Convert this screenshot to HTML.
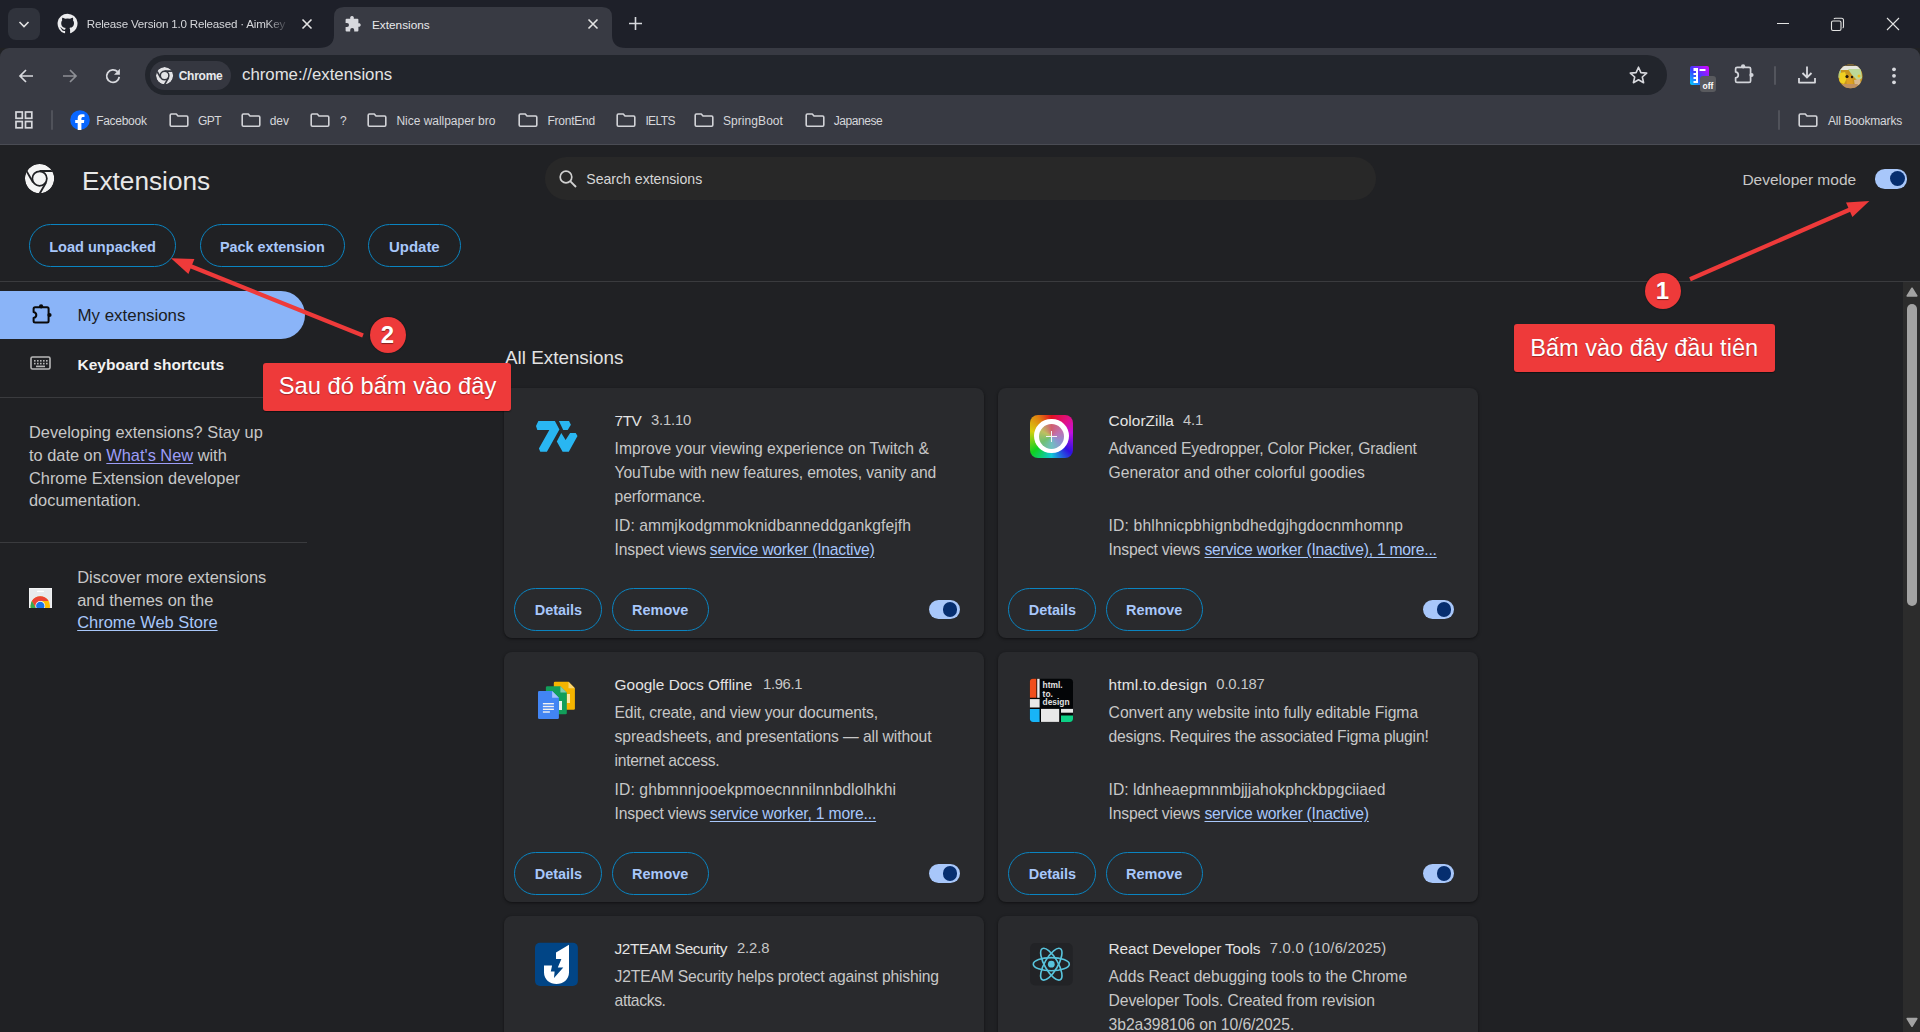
<!DOCTYPE html><html><head><meta charset="utf-8"><style>
html,body{margin:0;padding:0;width:1920px;height:1032px;overflow:hidden;background:#202124;font-family:"Liberation Sans",sans-serif;}
.a{position:absolute;}
.t{position:absolute;white-space:nowrap;line-height:1;}
svg{display:block;}
</style></head><body>
<div class="a" style="left:0px;top:0px;width:1920px;height:48px;background:#1e2029;"></div>
<div class="a" style="left:8px;top:8px;width:32px;height:32px;background:#30333c;border-radius:8px;"></div>
<svg class="a" style="left:16px;top:16px;" width="16" height="16" viewBox="0 0 16 16"><path d="M3.5 6 L8 10.5 L12.5 6" fill="none" stroke="#e3e3e3" stroke-width="1.6"/></svg>
<svg class="a" style="left:57.3px;top:13.1px;" width="21.2" height="21.2" viewBox="0 0 20 20"><path fill="#ececee" d="M10 .6a9.5 9.5 0 0 0-3 18.5c.5.1.65-.2.65-.46v-1.7c-2.64.57-3.2-1.27-3.2-1.27-.43-1.1-1.05-1.4-1.05-1.4-.86-.59.07-.58.07-.58.95.07 1.45.98 1.45.98.85 1.45 2.22 1.03 2.77.79.08-.62.33-1.03.6-1.27-2.1-.24-4.32-1.06-4.32-4.7 0-1.03.37-1.88.98-2.54-.1-.24-.43-1.21.09-2.52 0 0 .8-.26 2.6.97a9 9 0 0 1 4.74 0c1.8-1.23 2.6-.97 2.6-.97.52 1.31.19 2.28.09 2.52.61.66.98 1.51.98 2.54 0 3.65-2.22 4.46-4.34 4.7.34.3.65.88.65 1.77v2.63c0 .26.17.57.66.47A9.5 9.5 0 0 0 10 .6z"/></svg>
<div class="t" style="left:86.8px;top:17px;font-size:11.6px;line-height:14px;color:#d6d7db;width:203px;overflow:hidden;-webkit-mask-image:linear-gradient(90deg,#000 88%,transparent);mask-image:linear-gradient(90deg,#000 88%,transparent);letter-spacing:-0.2px">Release Version 1.0 Released · AimKey · GitHub</div>
<svg class="a" style="left:301px;top:18px;" width="12" height="12" viewBox="0 0 12 12"><path d="M1.5 1.5 L10.5 10.5 M10.5 1.5 L1.5 10.5" stroke="#e3e3e3" stroke-width="1.6"/></svg>
<svg class="a" style="left:318px;top:7px" width="324" height="41" viewBox="0 0 324 41"><path d="M0 41 Q16 41 16 28 L16 10 Q16 0 26 0 L284 0 Q294 0 294 10 L294 28 Q294 41 308 41 Z" fill="#383a43"/></svg>
<svg class="a" style="left:343px;top:15px;" width="18" height="18" viewBox="0 0 18 18"><path fill="#d8d9de" d="M7.2 2.2a2 2 0 0 1 3.6 0v1.6h3.6a1 1 0 0 1 1 1v3.4h1.2a2 2 0 0 1 0 3.6h-1.2v3.6a1 1 0 0 1-1 1h-3.2v-1.4a2 2 0 0 0-4 0v1.4H3.6a1 1 0 0 1-1-1v-3.4H4a2 2 0 0 0 0-4H2.6V4.8a1 1 0 0 1 1-1h3.6z"/></svg>
<div class="t " style="left:372.00px;top:20.01px;font-size:11.8px;color:#e8e9ec;">Extensions</div>
<svg class="a" style="left:587px;top:18px;" width="12" height="12" viewBox="0 0 12 12"><path d="M1.5 1.5 L10.5 10.5 M10.5 1.5 L1.5 10.5" stroke="#e3e3e3" stroke-width="1.6"/></svg>
<svg class="a" style="left:628px;top:16px;" width="15" height="15" viewBox="0 0 15 15"><path d="M7.5 1 V14 M1 7.5 H14" stroke="#d8d9de" stroke-width="1.6"/></svg>
<div class="a" style="left:1777px;top:23px;width:12px;height:1px;background:#e3e3e3;"></div>
<svg class="a" style="left:1830px;top:17px;" width="15" height="15" viewBox="0 0 15 15"><rect x="1.5" y="4" width="9.5" height="9.5" rx="1.5" fill="none" stroke="#e3e3e3" stroke-width="1.1"/><path d="M4 2.2 Q4.3 1.3 5.5 1.3 H11.5 Q13.5 1.3 13.5 3.3 V9.5 Q13.5 10.6 12.7 10.9" fill="none" stroke="#e3e3e3" stroke-width="1.1"/></svg>
<svg class="a" style="left:1886px;top:17px;" width="14" height="14" viewBox="0 0 14 14"><path d="M1 1 L13 13 M13 1 L1 13" stroke="#e3e3e3" stroke-width="1.1"/></svg>
<div class="a" style="left:0px;top:48px;width:1920px;height:97px;background:#383a43;border-radius:9px 9px 0 0;"></div>
<div class="a" style="left:0px;top:144px;width:1920px;height:1px;background:#4a4c54;"></div>
<svg class="a" style="left:17px;top:67px;" width="18" height="18" viewBox="0 0 18 18"><path d="M16 9 H3 M9 3 L3 9 L9 15" fill="none" stroke="#d8d9de" stroke-width="1.7"/></svg>
<svg class="a" style="left:61px;top:67px;" width="18" height="18" viewBox="0 0 18 18"><path d="M2 9 H15 M9 3 L15 9 L9 15" fill="none" stroke="#8d8f95" stroke-width="1.7"/></svg>
<svg class="a" style="left:104px;top:67px;" width="18" height="18" viewBox="0 0 18 18"><path d="M15.25 9.87 A6.3 6.3 0 1 1 13.53 4.72" fill="none" stroke="#d8d9de" stroke-width="1.8"/><path d="M15.9 1.7 V7.8 H10 Z" fill="#d8d9de"/></svg>
<div class="a" style="left:145px;top:55px;width:1522px;height:40px;background:#22252c;border-radius:20px;"></div>
<div class="a" style="left:150px;top:61px;width:81px;height:29px;background:#353740;border-radius:14.5px;"></div>
<svg class="a" style="left:154.8px;top:66.10000000000001px" width="19.2" height="19.2" viewBox="0 0 19.2 19.2"><defs><clipPath id="cl164"><circle cx="9.6" cy="9.6" r="8.6"/></clipPath></defs><g clip-path="url(#cl164)"><circle cx="9.6" cy="9.6" r="8.6" fill="#e3e3e6"/><circle cx="9.6" cy="9.6" r="4.27054794520548" fill="none" stroke="#353740" stroke-width="1.4946917808219178"/><path d="M9.6 5.152739726027397 H19.2" stroke="#353740" stroke-width="1.665513698630137" transform="rotate(0 9.6 9.6)"/><path d="M9.6 5.152739726027397 H19.2" stroke="#353740" stroke-width="1.665513698630137" transform="rotate(120 9.6 9.6)"/><path d="M9.6 5.152739726027397 H19.2" stroke="#353740" stroke-width="1.665513698630137" transform="rotate(240 9.6 9.6)"/></g></svg>
<div class="t " style="left:178.70px;top:70.04px;font-size:12px;color:#e8e9ec;font-weight:bold;letter-spacing:-0.25px;">Chrome</div>
<div class="t " style="left:242.00px;top:67.28px;font-size:16.8px;color:#e3e3e3;">chrome://extensions</div>
<svg class="a" style="left:1628px;top:65px;" width="21" height="21" viewBox="0 0 21 21"><path d="M10.5 2.2 L12.9 7.6 L18.7 8.1 L14.3 12 L15.6 17.7 L10.5 14.7 L5.4 17.7 L6.7 12 L2.3 8.1 L8.1 7.6 Z" fill="none" stroke="#d8d9de" stroke-width="1.6" stroke-linejoin="round"/></svg>
<svg class="a" style="left:1688px;top:64px" width="30" height="30" viewBox="0 0 30 30">
<defs><linearGradient id="gx" x1="0" y1="1" x2="1" y2="0"><stop offset="0" stop-color="#00d8ff"/><stop offset=".45" stop-color="#3a3cff"/><stop offset="1" stop-color="#e000ff"/></linearGradient></defs>
<rect x="2" y="2" width="19" height="19" rx="2" fill="url(#gx)"/>
<path d="M5.5 4 H10 V19 H5.5 V17 H8 V15 H5.5 V13 H8 V11 H5.5 V9 H8 V7 H5.5 Z" fill="#fff"/>
<rect x="11.5" y="5" width="6" height="2" fill="#fff"/>
<rect x="12" y="12" width="16" height="16" rx="3" fill="#595a5e"/>
<text x="20" y="24.5" font-family="Liberation Sans" font-weight="bold" font-size="8.5" fill="#fff" text-anchor="middle">off</text>
</svg>
<svg class="a" style="left:1728px;top:58px;" width="32" height="32" viewBox="0 0 32 32"><path d="M9.1 9.3 H21.1 Q22.6 9.3 22.6 10.8 V22.9 Q22.6 24.4 21.1 24.4 H9.1 Q7.6 24.4 7.6 22.9 V19.9 Q10.3 19.3 10.3 16.9 Q10.3 14.5 7.6 13.9 V10.8 Q7.6 9.3 9.1 9.3 Z" fill="none" stroke="#d2d4da" stroke-width="1.7" stroke-linejoin="round"/><circle cx="15.1" cy="8.3" r="2.1" fill="#d2d4da"/><circle cx="23.5" cy="17" r="2.1" fill="#d2d4da"/></svg>
<div class="a" style="left:1774px;top:66px;width:2px;height:19px;background:#53555d;border-radius:1px;"></div>
<svg class="a" style="left:1796px;top:64px;" width="22" height="22" viewBox="0 0 22 22"><path d="M11 2.5 V13.5 M6.5 9 L11 13.5 L15.5 9" fill="none" stroke="#d8d9de" stroke-width="1.8"/><path d="M3 14 V18.6 H19 V14" fill="none" stroke="#d8d9de" stroke-width="1.8" stroke-linejoin="round"/></svg>
<svg class="a" style="left:1837.5px;top:64px" width="25" height="25" viewBox="0 0 25 25">
<defs><clipPath id="av"><circle cx="12.5" cy="12.3" r="12"/></clipPath><filter id="avb"><feGaussianBlur stdDeviation=".6"/></filter></defs>
<g clip-path="url(#av)"><rect width="25" height="25" fill="#c8961e"/>
<g filter="url(#avb)">
<rect x="0" y="0" width="25" height="6" fill="#6a5a3a"/>
<path d="M3 2 H22 L23 6 H2 Z" fill="#e6e6de"/>
<path d="M10 5 L23 5 L24 14 L20 17 L14 11 Z" fill="#bcd898"/>
<rect x="0" y="6" width="3" height="8" fill="#a8c888"/>
<path d="M2 9 L7 8 L9 14 L6 20 L1 18 Z" fill="#f0d020"/>
<path d="M8 11 L14 12 L15 20 L9 22 Z" fill="#e0a020"/>
<circle cx="9" cy="12.5" r="1.6" fill="#1a1208"/><circle cx="14" cy="13" r="1.2" fill="#2a1a08"/>
<path d="M16 16 L22 15 L23 21 L17 22 Z" fill="#d8b890"/>
<path d="M4 20 L20 20 L18 25 L6 25 Z" fill="#c09060"/>
<circle cx="21" cy="12" r="1.5" fill="#f0c018"/>
</g></g></svg>
<svg class="a" style="left:1890px;top:66px;" width="8" height="20" viewBox="0 0 8 20"><circle cx="4" cy="3.3" r="1.9" fill="#d8d9de"/><circle cx="4" cy="9.8" r="1.9" fill="#d8d9de"/><circle cx="4" cy="16.3" r="1.9" fill="#d8d9de"/></svg>
<svg class="a" style="left:15px;top:111px;" width="18" height="18" viewBox="0 0 18 18"><g fill="none" stroke="#d8d9de" stroke-width="1.7"><rect x="1" y="1" width="6.3" height="6.3"/><rect x="10.5" y="1" width="6.3" height="6.3"/><rect x="1" y="10.5" width="6.3" height="6.3"/><rect x="10.5" y="10.5" width="6.3" height="6.3"/></g></svg>
<div class="a" style="left:50.8px;top:110px;width:2px;height:20px;background:#50525a;border-radius:1px;"></div>
<svg class="a" style="left:70px;top:110px;" width="20" height="20" viewBox="0 0 20 20"><circle cx="10" cy="10" r="9.8" fill="#0866ff"/><path d="M7.7 20 V12.9 H5.2 V10.1 H7.7 V8.3 C7.7 5.7 9.2 4.2 11.8 4.2 C12.9 4.2 13.9 4.3 14.5 4.4 V6.9 H13.1 C11.9 6.9 11.4 7.5 11.4 8.4 V10.1 H14.3 L13.9 12.9 H11.4 V20 Z" fill="#fff"/></svg>
<div class="t" style="left:96.2px;top:115.14px;font-size:12px;letter-spacing:-0.287px;color:#d6d7db;">Facebook</div>
<svg class="a" style="left:168.9px;top:113px;" width="20" height="14" viewBox="0 0 20 14"><path d="M1.2 2.2 Q1.2 1 2.4 1 H7.3 L9 3 H17.6 Q18.8 3 18.8 4.2 V12 Q18.8 13.2 17.6 13.2 H2.4 Q1.2 13.2 1.2 12 Z" fill="none" stroke="#d2d3d8" stroke-width="1.6" stroke-linejoin="round"/></svg>
<div class="t" style="left:198px;top:115.14px;font-size:12px;letter-spacing:-0.6px;color:#d6d7db;">GPT</div>
<svg class="a" style="left:241px;top:113px;" width="20" height="14" viewBox="0 0 20 14"><path d="M1.2 2.2 Q1.2 1 2.4 1 H7.3 L9 3 H17.6 Q18.8 3 18.8 4.2 V12 Q18.8 13.2 17.6 13.2 H2.4 Q1.2 13.2 1.2 12 Z" fill="none" stroke="#d2d3d8" stroke-width="1.6" stroke-linejoin="round"/></svg>
<div class="t" style="left:269.7px;top:115.14px;font-size:12px;letter-spacing:-0.015px;color:#d6d7db;">dev</div>
<svg class="a" style="left:309.8px;top:113px;" width="20" height="14" viewBox="0 0 20 14"><path d="M1.2 2.2 Q1.2 1 2.4 1 H7.3 L9 3 H17.6 Q18.8 3 18.8 4.2 V12 Q18.8 13.2 17.6 13.2 H2.4 Q1.2 13.2 1.2 12 Z" fill="none" stroke="#d2d3d8" stroke-width="1.6" stroke-linejoin="round"/></svg>
<div class="t" style="left:340px;top:115.14px;font-size:12px;letter-spacing:0px;color:#d6d7db;">?</div>
<svg class="a" style="left:367px;top:113px;" width="20" height="14" viewBox="0 0 20 14"><path d="M1.2 2.2 Q1.2 1 2.4 1 H7.3 L9 3 H17.6 Q18.8 3 18.8 4.2 V12 Q18.8 13.2 17.6 13.2 H2.4 Q1.2 13.2 1.2 12 Z" fill="none" stroke="#d2d3d8" stroke-width="1.6" stroke-linejoin="round"/></svg>
<div class="t" style="left:396.4px;top:115.14px;font-size:12px;letter-spacing:-0.021px;color:#d6d7db;">Nice wallpaper bro</div>
<svg class="a" style="left:518.3px;top:113px;" width="20" height="14" viewBox="0 0 20 14"><path d="M1.2 2.2 Q1.2 1 2.4 1 H7.3 L9 3 H17.6 Q18.8 3 18.8 4.2 V12 Q18.8 13.2 17.6 13.2 H2.4 Q1.2 13.2 1.2 12 Z" fill="none" stroke="#d2d3d8" stroke-width="1.6" stroke-linejoin="round"/></svg>
<div class="t" style="left:547.5px;top:115.14px;font-size:12px;letter-spacing:-0.257px;color:#d6d7db;">FrontEnd</div>
<svg class="a" style="left:616px;top:113px;" width="20" height="14" viewBox="0 0 20 14"><path d="M1.2 2.2 Q1.2 1 2.4 1 H7.3 L9 3 H17.6 Q18.8 3 18.8 4.2 V12 Q18.8 13.2 17.6 13.2 H2.4 Q1.2 13.2 1.2 12 Z" fill="none" stroke="#d2d3d8" stroke-width="1.6" stroke-linejoin="round"/></svg>
<div class="t" style="left:645.4px;top:115.14px;font-size:12px;letter-spacing:-0.6px;color:#d6d7db;">IELTS</div>
<svg class="a" style="left:694px;top:113px;" width="20" height="14" viewBox="0 0 20 14"><path d="M1.2 2.2 Q1.2 1 2.4 1 H7.3 L9 3 H17.6 Q18.8 3 18.8 4.2 V12 Q18.8 13.2 17.6 13.2 H2.4 Q1.2 13.2 1.2 12 Z" fill="none" stroke="#d2d3d8" stroke-width="1.6" stroke-linejoin="round"/></svg>
<div class="t" style="left:723px;top:115.14px;font-size:12px;letter-spacing:0.063px;color:#d6d7db;">SpringBoot</div>
<svg class="a" style="left:805px;top:113px;" width="20" height="14" viewBox="0 0 20 14"><path d="M1.2 2.2 Q1.2 1 2.4 1 H7.3 L9 3 H17.6 Q18.8 3 18.8 4.2 V12 Q18.8 13.2 17.6 13.2 H2.4 Q1.2 13.2 1.2 12 Z" fill="none" stroke="#d2d3d8" stroke-width="1.6" stroke-linejoin="round"/></svg>
<div class="t" style="left:833.75px;top:115.14px;font-size:12px;letter-spacing:-0.436px;color:#d6d7db;">Japanese</div>
<div class="a" style="left:1777.6px;top:110px;width:2px;height:20px;background:#50525a;border-radius:1px;"></div>
<svg class="a" style="left:1798px;top:113px;" width="20" height="14" viewBox="0 0 20 14"><path d="M1.2 2.2 Q1.2 1 2.4 1 H7.3 L9 3 H17.6 Q18.8 3 18.8 4.2 V12 Q18.8 13.2 17.6 13.2 H2.4 Q1.2 13.2 1.2 12 Z" fill="none" stroke="#d2d3d8" stroke-width="1.6" stroke-linejoin="round"/></svg>
<div class="t " style="left:1827.90px;top:115.14px;font-size:12px;color:#d6d7db;letter-spacing:-0.2px;">All Bookmarks</div>
<svg class="a" style="left:23.85px;top:162.85px" width="31.2" height="31.2" viewBox="0 0 31.2 31.2"><defs><clipPath id="cl39"><circle cx="15.6" cy="15.6" r="14.6"/></clipPath></defs><g clip-path="url(#cl39)"><circle cx="15.6" cy="15.6" r="14.6" fill="#f4f4f4"/><circle cx="15.6" cy="15.6" r="7.25" fill="none" stroke="#202124" stroke-width="1.75"/><path d="M15.6 8.05 H31.2" stroke="#202124" stroke-width="1.95" transform="rotate(0 15.6 15.6)"/><path d="M15.6 8.05 H31.2" stroke="#202124" stroke-width="1.95" transform="rotate(120 15.6 15.6)"/><path d="M15.6 8.05 H31.2" stroke="#202124" stroke-width="1.95" transform="rotate(240 15.6 15.6)"/></g></svg>
<div class="t " style="left:82.00px;top:167.92px;font-size:26.2px;color:#e8e8e8;">Extensions</div>
<div class="a" style="left:545px;top:157px;width:831px;height:43px;background:#282828;border-radius:21.5px;"></div>
<svg class="a" style="left:558px;top:169px;" width="20" height="20" viewBox="0 0 20 20"><circle cx="8" cy="8" r="5.8" fill="none" stroke="#d0d0d0" stroke-width="1.7"/><path d="M12.2 12.2 L18 18" stroke="#d0d0d0" stroke-width="1.9"/></svg>
<div class="t " style="left:586.25px;top:171.81px;font-size:14.1px;color:#d6d6d6;">Search extensions</div>
<div class="t " style="left:1742.40px;top:172.08px;font-size:15.5px;color:#c7c7c7;">Developer mode</div>
<div class="a" style="left:1875px;top:169.0px;width:32.2px;height:19.6px;background:#a8c7fa;border-radius:9.8px;"></div>
<div class="a" style="left:1889.6000000000001px;top:171.3px;width:15px;height:15px;background:#062e6f;border-radius:7.5px;"></div>
<div class="a" style="left:29px;top:224px;width:147px;height:43px;background:transparent;border-radius:21.5px;box-sizing:border-box;border:1px solid #0a84c1;"></div>
<div class="t " style="left:49.20px;top:239.77px;font-size:14.56px;color:#a8c7fa;font-weight:bold;">Load unpacked</div>
<div class="a" style="left:200px;top:224px;width:145px;height:43px;background:transparent;border-radius:21.5px;box-sizing:border-box;border:1px solid #0a84c1;"></div>
<div class="t " style="left:220.00px;top:239.93px;font-size:14.38px;color:#a8c7fa;font-weight:bold;">Pack extension</div>
<div class="a" style="left:368px;top:224px;width:93px;height:43px;background:transparent;border-radius:21.5px;box-sizing:border-box;border:1px solid #0a84c1;"></div>
<div class="t " style="left:389.00px;top:240.14px;font-size:14.96px;color:#a8c7fa;font-weight:bold;">Update</div>
<div class="a" style="left:0px;top:281px;width:1903px;height:1px;background:#3a3b3e;"></div>
<div class="a" style="left:0px;top:291px;width:305px;height:48px;background:#8ab4f8;border-radius:0 24px 24px 0;"></div>
<svg class="a" style="left:26px;top:298px;" width="32" height="32" viewBox="0 0 32 32"><path d="M9.1 9.3 H21.1 Q22.6 9.3 22.6 10.8 V22.9 Q22.6 24.4 21.1 24.4 H9.1 Q7.6 24.4 7.6 22.9 V19.9 Q10.3 19.3 10.3 16.9 Q10.3 14.5 7.6 13.9 V10.8 Q7.6 9.3 9.1 9.3 Z" fill="none" stroke="#0a0a0a" stroke-width="2.0" stroke-linejoin="round"/><circle cx="15.1" cy="8.3" r="2.1" fill="#0a0a0a"/><circle cx="23.5" cy="17" r="2.1" fill="#0a0a0a"/></svg>
<div class="t " style="left:77.50px;top:308.19px;font-size:16.9px;color:#1b1c1f;">My extensions</div>
<svg class="a" style="left:30px;top:356px;" width="21" height="14" viewBox="0 0 21 14"><rect x="1" y="1" width="19" height="12" rx="1.5" fill="none" stroke="#b8b8b8" stroke-width="1.6"/><g fill="#b8b8b8"><rect x="4" y="4" width="1.6" height="1.6"/><rect x="7" y="4" width="1.6" height="1.6"/><rect x="10" y="4" width="1.6" height="1.6"/><rect x="13" y="4" width="1.6" height="1.6"/><rect x="16" y="4" width="1.6" height="1.6"/><rect x="4" y="6.8" width="1.6" height="1.6"/><rect x="7" y="6.8" width="1.6" height="1.6"/><rect x="10" y="6.8" width="1.6" height="1.6"/><rect x="13" y="6.8" width="1.6" height="1.6"/><rect x="16" y="6.8" width="1.6" height="1.6"/><rect x="6" y="9.6" width="9" height="1.6"/></g></svg>
<div class="t " style="left:77.50px;top:356.85px;font-size:15.53px;color:#f2f2f2;font-weight:bold;">Keyboard shortcuts</div>
<div class="a" style="left:0px;top:397px;width:307px;height:1px;background:#3a3b3e;"></div>
<div class="t " style="left:29.00px;top:424.33px;font-size:16.38px;color:#c7c7c7;">Developing extensions? Stay up</div>
<div class="t " style="left:29.00px;top:446.93px;font-size:16.38px;color:#c7c7c7;">to date on <span style="color:#9d9df8;text-decoration:underline;text-underline-offset:2px">What's New</span> with</div>
<div class="t " style="left:29.00px;top:469.53px;font-size:16.38px;color:#c7c7c7;">Chrome Extension developer</div>
<div class="t " style="left:29.00px;top:492.13px;font-size:16.38px;color:#c7c7c7;">documentation.</div>
<div class="a" style="left:0px;top:542px;width:307px;height:1px;background:#3a3b3e;"></div>
<svg class="a" style="left:29px;top:587.7px" width="23.1" height="20.4" viewBox="0 0 23.1 20.4">
<rect x="0" y="0" width="23.1" height="20.4" fill="#f4f5f6"/><rect x="0.8" y="0.9" width="21.5" height="19.5" fill="#e8eaed"/>
<rect x="8" y="2.7" width="7" height="1.3" rx=".6" fill="#fff"/>
<circle cx="11.3" cy="17.9" r="9.7" fill="#fbbc04"/>
<path d="M19.67 13.00 A9.7 9.7 0 0 0 2.87 13.10 L7.06 20.35 L11.3 17.9 L11.30 13.00 Z" fill="#ea4335"/><path d="M2.87 13.10 A9.7 9.7 0 0 0 11.36 27.60 L15.54 20.35 L11.3 17.9 L7.06 20.35 Z" fill="#34a853"/>
<circle cx="11.3" cy="17.9" r="4.9" fill="#fff"/><circle cx="11.3" cy="17.9" r="4.2" fill="#1a73e8"/>
</svg>
<div class="t " style="left:77.20px;top:568.68px;font-size:16.45px;color:#c7c7c7;">Discover more extensions</div>
<div class="t " style="left:77.20px;top:591.58px;font-size:16.45px;color:#c7c7c7;">and themes on the</div>
<div class="t " style="left:77.20px;top:614.48px;font-size:16.45px;color:#c7c7c7;"><span style="color:#a8c7fa;text-decoration:underline;text-underline-offset:2px">Chrome Web Store</span></div>
<div class="t " style="left:505.00px;top:348.74px;font-size:18.85px;color:#e3e3e3;">All Extensions</div>
<div class="a" style="left:504px;top:388px;width:480px;height:250px;background:#292a2d;border-radius:8px;box-shadow:0 1px 2px rgba(0,0,0,.3),0 1px 3px 1px rgba(0,0,0,.15);"></div>
<svg class="a" style="left:528px;top:410px" width="60" height="55" viewBox="0 0 60 55"><g fill="#29b6f2">
<path d="M8 16 L10.4 10.9 L26.9 10.9 L31.4 19.4 L18.9 41.8 L12.3 41.8 L10.9 38.4 L21.3 20 L9.3 20 Z"/>
<path d="M30.9 10.9 L41 10.9 L42.9 14.7 L39.7 20 L35.2 20 Z"/>
<path d="M28.8 31.4 L33.3 22.9 L37.6 30.1 L42.1 22.9 L47.7 22.9 L49.5 26.1 L40.8 41.8 L34.6 41.8 Z"/>
</g></svg>
<div class="t " style="left:614.60px;top:412.76px;font-size:15.4px;color:#e3e3e3;letter-spacing:-0.514px;">7TV</div>
<div class="t " style="left:651.00px;top:413.27px;font-size:14.8px;color:#c7c7c7;letter-spacing:-0.191px;">3.1.10</div>
<div class="t " style="left:614.60px;top:440.91px;font-size:15.7px;color:#c7c7c7;letter-spacing:-0.005px;">Improve your viewing experience on Twitch &amp;</div>
<div class="t " style="left:614.60px;top:464.91px;font-size:15.7px;color:#c7c7c7;letter-spacing:-0.154px;">YouTube with new features, emotes, vanity and</div>
<div class="t " style="left:614.60px;top:488.91px;font-size:15.7px;color:#c7c7c7;letter-spacing:-0.141px;">performance.</div>
<div class="t " style="left:614.60px;top:518.21px;font-size:15.7px;color:#c7c7c7;letter-spacing:0.073px;">ID: ammjkodgmmoknidbanneddgankgfejfh</div>
<div class="t " style="left:614.60px;top:542.01px;font-size:15.7px;color:#c7c7c7;letter-spacing:-0.21px;">Inspect views</div>
<div class="t " style="left:709.80px;top:542.01px;font-size:15.7px;color:#a8c7fa;letter-spacing:-0.209px;text-decoration:underline;text-underline-offset:2px;">service worker (Inactive)</div>
<div class="a" style="left:514px;top:588px;width:88px;height:43px;background:transparent;border-radius:21.5px;box-sizing:border-box;border:1px solid #0a84c1;"></div>
<div class="t " style="left:534.70px;top:602.76px;font-size:14.46px;color:#a8c7fa;font-weight:bold;">Details</div>
<div class="a" style="left:612px;top:588px;width:97px;height:43px;background:transparent;border-radius:21.5px;box-sizing:border-box;border:1px solid #0a84c1;"></div>
<div class="t " style="left:632.10px;top:602.76px;font-size:14.46px;color:#a8c7fa;font-weight:bold;">Remove</div>
<div class="a" style="left:928.7px;top:599.8px;width:31.4px;height:19.4px;background:#a8c7fa;border-radius:9.7px;"></div>
<div class="a" style="left:943.1px;top:602.3px;width:14.4px;height:14.4px;background:#062e6f;border-radius:7.2px;"></div>
<div class="a" style="left:998px;top:388px;width:480px;height:250px;background:#292a2d;border-radius:8px;box-shadow:0 1px 2px rgba(0,0,0,.3),0 1px 3px 1px rgba(0,0,0,.15);"></div>
<div class="a" style="left:1029.9px;top:414.8px;width:43px;height:43px;border-radius:8px;background:conic-gradient(from 0deg,#e01020,#e0108a 45deg,#c010e0 80deg,#3010e0 130deg,#10c8d8 180deg,#10d020 230deg,#d8d010 285deg,#e08010 325deg,#e01020)">
<div class="a" style="left:4.3px;top:4.3px;width:34.4px;height:34.4px;border-radius:50%;background:#fff"></div>
<div class="a" style="left:8.9px;top:8.9px;width:25.2px;height:25.2px;border-radius:50%;background:conic-gradient(from 0deg,#d06070,#c070b0 60deg,#9090d0 120deg,#70c0c0 180deg,#70c070 240deg,#c0c060 300deg,#d06070)"></div>
<div class="a" style="left:16px;top:21px;width:11px;height:1.6px;background:#f4f4f4"></div>
<div class="a" style="left:20.7px;top:16.3px;width:1.6px;height:11px;background:#f4f4f4"></div>
</div>
<div class="t " style="left:1108.60px;top:412.76px;font-size:15.4px;color:#e3e3e3;letter-spacing:0.037px;">ColorZilla</div>
<div class="t " style="left:1183.00px;top:413.27px;font-size:14.8px;color:#c7c7c7;letter-spacing:-0.191px;">4.1</div>
<div class="t " style="left:1108.60px;top:440.91px;font-size:15.7px;color:#c7c7c7;letter-spacing:-0.195px;">Advanced Eyedropper, Color Picker, Gradient</div>
<div class="t " style="left:1108.60px;top:464.91px;font-size:15.7px;color:#c7c7c7;letter-spacing:0.019px;">Generator and other colorful goodies</div>
<div class="t " style="left:1108.60px;top:518.21px;font-size:15.7px;color:#c7c7c7;letter-spacing:0.14px;">ID: bhlhnicpbhignbdhedgjhgdocnmhomnp</div>
<div class="t " style="left:1108.60px;top:542.01px;font-size:15.7px;color:#c7c7c7;letter-spacing:-0.21px;">Inspect views</div>
<div class="t " style="left:1204.50px;top:542.01px;font-size:15.7px;color:#a8c7fa;letter-spacing:-0.233px;text-decoration:underline;text-underline-offset:2px;">service worker (Inactive), 1 more...</div>
<div class="a" style="left:1008px;top:588px;width:88px;height:43px;background:transparent;border-radius:21.5px;box-sizing:border-box;border:1px solid #0a84c1;"></div>
<div class="t " style="left:1028.70px;top:602.76px;font-size:14.46px;color:#a8c7fa;font-weight:bold;">Details</div>
<div class="a" style="left:1106px;top:588px;width:97px;height:43px;background:transparent;border-radius:21.5px;box-sizing:border-box;border:1px solid #0a84c1;"></div>
<div class="t " style="left:1126.10px;top:602.76px;font-size:14.46px;color:#a8c7fa;font-weight:bold;">Remove</div>
<div class="a" style="left:1422.7px;top:599.8px;width:31.4px;height:19.4px;background:#a8c7fa;border-radius:9.7px;"></div>
<div class="a" style="left:1437.1000000000001px;top:602.3px;width:14.4px;height:14.4px;background:#062e6f;border-radius:7.2px;"></div>
<div class="a" style="left:504px;top:652px;width:480px;height:250px;background:#292a2d;border-radius:8px;box-shadow:0 1px 2px rgba(0,0,0,.3),0 1px 3px 1px rgba(0,0,0,.15);"></div>
<svg class="a" style="left:528px;top:672px" width="60" height="56" viewBox="0 0 60 56">
<path d="M27 9.8 H40.5 L46.9 16.2 V36.5 Q46.9 37.7 45.7 37.7 H27 Q25.8 37.7 25.8 36.5 V11 Q25.8 9.8 27 9.8Z" fill="#f4b400"/>
<path d="M40.5 9.8 L46.9 16.2 H40.5 Z" fill="#fad670"/>
<rect x="39" y="22" width="3" height="9" fill="#fde9a8"/>
<path d="M19.1 14.2 H32.4 L38.8 20.6 V41.1 Q38.8 42.3 37.6 42.3 H19.1 Q17.9 42.3 17.9 41.1 V15.4 Q17.9 14.2 19.1 14.2Z" fill="#129e5a"/>
<path d="M32.4 14.2 L38.8 20.6 H32.4 Z" fill="#87cead"/>
<rect x="31" y="29" width="3" height="9" fill="#e8f5ee"/>
<path d="M11.2 19 H24.1 L30.9 25.8 V45.7 Q30.9 46.9 29.7 46.9 H11.2 Q10 46.9 10 45.7 V20.2 Q10 19 11.2 19Z" fill="#4285f4"/>
<path d="M24.1 19 L30.9 25.8 H24.1 Z" fill="#a1c2fa"/>
<g fill="#f1f1f1"><rect x="14.9" y="31" width="11" height="1.4"/><rect x="14.9" y="33.8" width="11" height="1.4"/><rect x="14.9" y="36.6" width="11" height="1.4"/><rect x="14.9" y="39.3" width="7" height="1.4"/></g>
</svg>
<div class="t " style="left:614.60px;top:676.76px;font-size:15.4px;color:#e3e3e3;letter-spacing:0.02px;">Google Docs Offline</div>
<div class="t " style="left:763.00px;top:677.27px;font-size:14.8px;color:#c7c7c7;letter-spacing:-0.324px;">1.96.1</div>
<div class="t " style="left:614.60px;top:704.91px;font-size:15.7px;color:#c7c7c7;letter-spacing:-0.187px;">Edit, create, and view your documents,</div>
<div class="t " style="left:614.60px;top:728.91px;font-size:15.7px;color:#c7c7c7;letter-spacing:-0.109px;">spreadsheets, and presentations — all without</div>
<div class="t " style="left:614.60px;top:752.91px;font-size:15.7px;color:#c7c7c7;letter-spacing:-0.328px;">internet access.</div>
<div class="t " style="left:614.60px;top:782.21px;font-size:15.7px;color:#c7c7c7;letter-spacing:0.094px;">ID: ghbmnnjooekpmoecnnnilnnbdlolhkhi</div>
<div class="t " style="left:614.60px;top:806.01px;font-size:15.7px;color:#c7c7c7;letter-spacing:-0.21px;">Inspect views</div>
<div class="t " style="left:709.80px;top:806.01px;font-size:15.7px;color:#a8c7fa;letter-spacing:-0.184px;text-decoration:underline;text-underline-offset:2px;">service worker, 1 more...</div>
<div class="a" style="left:514px;top:852px;width:88px;height:43px;background:transparent;border-radius:21.5px;box-sizing:border-box;border:1px solid #0a84c1;"></div>
<div class="t " style="left:534.70px;top:866.76px;font-size:14.46px;color:#a8c7fa;font-weight:bold;">Details</div>
<div class="a" style="left:612px;top:852px;width:97px;height:43px;background:transparent;border-radius:21.5px;box-sizing:border-box;border:1px solid #0a84c1;"></div>
<div class="t " style="left:632.10px;top:866.76px;font-size:14.46px;color:#a8c7fa;font-weight:bold;">Remove</div>
<div class="a" style="left:928.7px;top:863.8px;width:31.4px;height:19.4px;background:#a8c7fa;border-radius:9.7px;"></div>
<div class="a" style="left:943.1px;top:866.3px;width:14.4px;height:14.4px;background:#062e6f;border-radius:7.2px;"></div>
<div class="a" style="left:998px;top:652px;width:480px;height:250px;background:#292a2d;border-radius:8px;box-shadow:0 1px 2px rgba(0,0,0,.3),0 1px 3px 1px rgba(0,0,0,.15);"></div>
<svg class="a" style="left:1022px;top:672px" width="60" height="56" viewBox="0 0 60 56">
<rect x="7.9" y="6.8" width="43.1" height="43.1" rx="3.5" fill="#030507"/>
<path d="M11 6.8 H14.4 V25.8 H7.9 V9.9 Q7.9 6.8 11 6.8Z" fill="#f04e1c"/>
<rect x="15.2" y="6.8" width="2.4" height="19" fill="#ececec"/>
<rect x="7.9" y="27.1" width="9.7" height="8.4" fill="#e8e8e8"/>
<path d="M7.9 36.9 H17.6 V49.9 H11 Q7.9 49.9 7.9 46.8Z" fill="#18b4f7"/>
<rect x="19" y="36.9" width="18.2" height="13" fill="#e8e8e8"/>
<rect x="39" y="36.9" width="12" height="3.8" fill="#e8e8e8"/>
<path d="M39 43.4 H51 V46.8 Q51 49.9 47.9 49.9 H39Z" fill="#0ccf85"/>
<g font-family="Liberation Sans" font-weight="bold" font-size="8.4" fill="#e0e0e0"><text x="20.6" y="16">html.</text><text x="20.6" y="24.6">to.</text><text x="20.6" y="32.8">design</text></g>
</svg>
<div class="t " style="left:1108.60px;top:676.76px;font-size:15.4px;color:#e3e3e3;letter-spacing:0.195px;">html.to.design</div>
<div class="t " style="left:1216.30px;top:677.27px;font-size:14.8px;color:#c7c7c7;letter-spacing:-0.139px;">0.0.187</div>
<div class="t " style="left:1108.60px;top:704.91px;font-size:15.7px;color:#c7c7c7;letter-spacing:-0.04px;">Convert any website into fully editable Figma</div>
<div class="t " style="left:1108.60px;top:728.91px;font-size:15.7px;color:#c7c7c7;letter-spacing:-0.21px;">designs. Requires the associated Figma plugin!</div>
<div class="t " style="left:1108.60px;top:782.21px;font-size:15.7px;color:#c7c7c7;letter-spacing:-0.015px;">ID: ldnheaepmnmbjjjahokphckbpgciiaed</div>
<div class="t " style="left:1108.60px;top:806.01px;font-size:15.7px;color:#c7c7c7;letter-spacing:-0.21px;">Inspect views</div>
<div class="t " style="left:1204.50px;top:806.01px;font-size:15.7px;color:#a8c7fa;letter-spacing:-0.229px;text-decoration:underline;text-underline-offset:2px;">service worker (Inactive)</div>
<div class="a" style="left:1008px;top:852px;width:88px;height:43px;background:transparent;border-radius:21.5px;box-sizing:border-box;border:1px solid #0a84c1;"></div>
<div class="t " style="left:1028.70px;top:866.76px;font-size:14.46px;color:#a8c7fa;font-weight:bold;">Details</div>
<div class="a" style="left:1106px;top:852px;width:97px;height:43px;background:transparent;border-radius:21.5px;box-sizing:border-box;border:1px solid #0a84c1;"></div>
<div class="t " style="left:1126.10px;top:866.76px;font-size:14.46px;color:#a8c7fa;font-weight:bold;">Remove</div>
<div class="a" style="left:1422.7px;top:863.8px;width:31.4px;height:19.4px;background:#a8c7fa;border-radius:9.7px;"></div>
<div class="a" style="left:1437.1000000000001px;top:866.3px;width:14.4px;height:14.4px;background:#062e6f;border-radius:7.2px;"></div>
<div class="a" style="left:504px;top:916px;width:480px;height:250px;background:#292a2d;border-radius:8px;box-shadow:0 1px 2px rgba(0,0,0,.3),0 1px 3px 1px rgba(0,0,0,.15);"></div>
<svg class="a" style="left:528px;top:936px" width="60" height="56" viewBox="0 0 60 56">
<rect x="7" y="6.8" width="42.9" height="43.1" rx="5" fill="#014586"/>
<path d="M41 8.7 L41 36.5 C41 43.5 35 48 28.5 48 C22 48 16 43.5 16 36.5 L16 29.6 L24.1 29.6 L22.8 35.5 L26.6 35.5 L26 42 L35.3 31.5 L29.8 31.5 L33.4 23 L28 23 L28 16.5 Z" fill="#fff"/>
</svg>
<div class="t " style="left:614.60px;top:940.76px;font-size:15.4px;color:#e3e3e3;letter-spacing:-0.437px;">J2TEAM Security</div>
<div class="t " style="left:737.00px;top:941.27px;font-size:14.8px;color:#c7c7c7;letter-spacing:-0.123px;">2.2.8</div>
<div class="t " style="left:614.60px;top:968.91px;font-size:15.7px;color:#c7c7c7;letter-spacing:-0.194px;">J2TEAM Security helps protect against phishing</div>
<div class="t " style="left:614.60px;top:992.91px;font-size:15.7px;color:#c7c7c7;letter-spacing:-0.387px;">attacks.</div>
<div class="a" style="left:514px;top:1116px;width:88px;height:43px;background:transparent;border-radius:21.5px;box-sizing:border-box;border:1px solid #0a84c1;"></div>
<div class="t " style="left:534.70px;top:1130.76px;font-size:14.46px;color:#a8c7fa;font-weight:bold;">Details</div>
<div class="a" style="left:612px;top:1116px;width:97px;height:43px;background:transparent;border-radius:21.5px;box-sizing:border-box;border:1px solid #0a84c1;"></div>
<div class="t " style="left:632.10px;top:1130.76px;font-size:14.46px;color:#a8c7fa;font-weight:bold;">Remove</div>
<div class="a" style="left:928.7px;top:1127.8px;width:31.4px;height:19.4px;background:#a8c7fa;border-radius:9.7px;"></div>
<div class="a" style="left:943.1px;top:1130.3px;width:14.4px;height:14.4px;background:#062e6f;border-radius:7.2px;"></div>
<div class="a" style="left:998px;top:916px;width:480px;height:250px;background:#292a2d;border-radius:8px;box-shadow:0 1px 2px rgba(0,0,0,.3),0 1px 3px 1px rgba(0,0,0,.15);"></div>
<svg class="a" style="left:1022px;top:936px" width="60" height="56" viewBox="0 0 60 56">
<rect x="8.1" y="7" width="42.6" height="42.4" rx="5" fill="#222326"/>
<g fill="none" stroke="#58c4dc" stroke-width="1.6" transform="translate(29.3 28.2)">
<ellipse rx="18" ry="6.6"/><ellipse rx="18" ry="6.6" transform="rotate(60)"/><ellipse rx="18" ry="6.6" transform="rotate(120)"/></g>
<circle cx="29.3" cy="28.2" r="3.4" fill="#58c4dc"/>
</svg>
<div class="t " style="left:1108.60px;top:940.76px;font-size:15.4px;color:#e3e3e3;letter-spacing:-0.135px;">React Developer Tools</div>
<div class="t " style="left:1269.80px;top:941.27px;font-size:14.8px;color:#c7c7c7;letter-spacing:0.234px;">7.0.0 (10/6/2025)</div>
<div class="t " style="left:1108.60px;top:968.91px;font-size:15.7px;color:#c7c7c7;letter-spacing:-0.038px;">Adds React debugging tools to the Chrome</div>
<div class="t " style="left:1108.60px;top:992.91px;font-size:15.7px;color:#c7c7c7;letter-spacing:-0.123px;">Developer Tools. Created from revision</div>
<div class="t " style="left:1108.60px;top:1016.91px;font-size:15.7px;color:#c7c7c7;letter-spacing:-0.083px;">3b2a398106 on 10/6/2025.</div>
<div class="a" style="left:1008px;top:1116px;width:88px;height:43px;background:transparent;border-radius:21.5px;box-sizing:border-box;border:1px solid #0a84c1;"></div>
<div class="t " style="left:1028.70px;top:1130.76px;font-size:14.46px;color:#a8c7fa;font-weight:bold;">Details</div>
<div class="a" style="left:1106px;top:1116px;width:97px;height:43px;background:transparent;border-radius:21.5px;box-sizing:border-box;border:1px solid #0a84c1;"></div>
<div class="t " style="left:1126.10px;top:1130.76px;font-size:14.46px;color:#a8c7fa;font-weight:bold;">Remove</div>
<div class="a" style="left:1422.7px;top:1127.8px;width:31.4px;height:19.4px;background:#a8c7fa;border-radius:9.7px;"></div>
<div class="a" style="left:1437.1000000000001px;top:1130.3px;width:14.4px;height:14.4px;background:#062e6f;border-radius:7.2px;"></div>
<div class="a" style="left:1902.7px;top:282px;width:17.3px;height:750px;background:#2c2c2c;"></div>
<svg class="a" style="left:1902px;top:284px;" width="18" height="16" viewBox="0 0 18 16"><path d="M10 4.3 L14.8 11.9 H5.2 Z" fill="#a3a3a3" stroke="#a3a3a3" stroke-width="1.6" stroke-linejoin="round"/></svg>
<div class="a" style="left:1906.9px;top:303.9px;width:10.1px;height:302.1px;background:#a3a3a3;border-radius:5.05px;"></div>
<svg class="a" style="left:1902px;top:1016px;" width="18" height="14" viewBox="0 0 18 14"><path d="M10 10.2 L14.8 2.6 H5.2 Z" fill="#a3a3a3" stroke="#a3a3a3" stroke-width="1.6" stroke-linejoin="round"/></svg>
<div class="a" style="left:1903px;top:281px;width:17px;height:1px;background:#3a3b3e;"></div>
<svg class="a" style="left:0;top:0" width="1920" height="1032"><path d="M363.0 335.5 L187.7 265.0" stroke="#ee3a3a" stroke-width="4.2"/><path d="M171.0 258.3 L194.4 259.1 L188.4 273.9 Z" fill="#ee3a3a"/></svg>
<svg class="a" style="left:0;top:0" width="1920" height="1032"><path d="M1690.0 279.2 L1852.9 208.2" stroke="#ee3a3a" stroke-width="4.2"/><path d="M1869.4 201.0 L1852.4 217.1 L1846.0 202.5 Z" fill="#ee3a3a"/></svg>
<div class="a" style="left:1644.5px;top:272.6px;width:36px;height:36px;background:#ee3a3a;border-radius:18px;box-shadow:0 0 1.5px rgba(0,0,0,.6);"></div>
<div class="t" style="left:1644.5px;top:272.6px;width:36px;height:36px;line-height:36px;text-align:center;font-size:24px;color:#fff;font-weight:bold;text-shadow:0 1px 1px rgba(0,0,0,.45)">1</div>
<div class="a" style="left:369.5px;top:316.5px;width:36px;height:36px;background:#ee3a3a;border-radius:18px;box-shadow:0 0 1.5px rgba(0,0,0,.6);"></div>
<div class="t" style="left:369.5px;top:316.5px;width:36px;height:36px;line-height:36px;text-align:center;font-size:24px;color:#fff;font-weight:bold;text-shadow:0 1px 1px rgba(0,0,0,.45)">2</div>
<div class="a" style="left:1514px;top:324px;width:261px;height:48px;background:#ee3a3a;border-radius:3px;box-shadow:0 1px 1px rgba(0,0,0,.45);"></div>
<div class="t " style="left:1530.20px;top:336.65px;font-size:23.57px;color:#fff;text-shadow:0 1px 1px rgba(0,0,0,.35);">Bấm vào đây đầu tiên</div>
<div class="a" style="left:263px;top:363px;width:248px;height:48px;background:#ee3a3a;border-radius:3px;box-shadow:0 1px 1px rgba(0,0,0,.45);"></div>
<div class="t " style="left:278.70px;top:375.42px;font-size:23.72px;color:#fff;text-shadow:0 1px 1px rgba(0,0,0,.35);">Sau đó bấm vào đây</div>
</body></html>
